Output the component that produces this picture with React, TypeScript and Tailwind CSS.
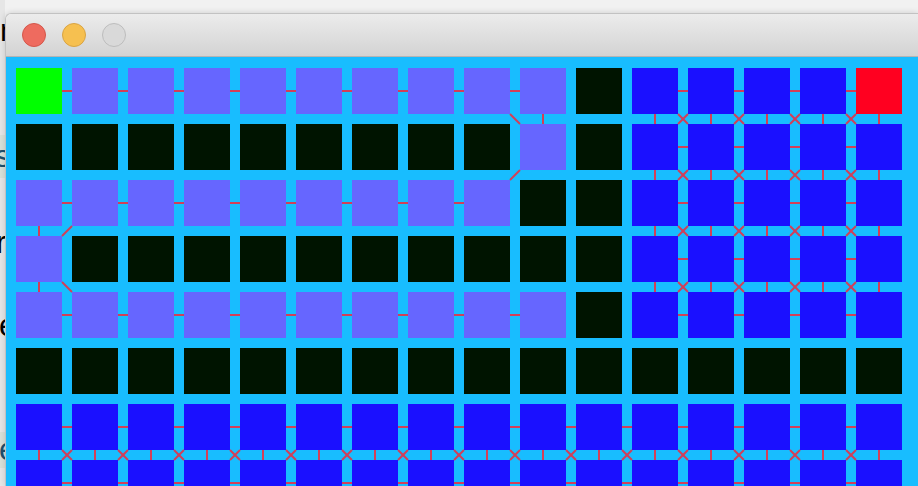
import React from "react"

// grid of the path finder: S start, E end, P path, W wall, U open
const GRID = [
  "SPPPPPPPPPWUUUUE",
  "WWWWWWWWWPWUUUUU",
  "PPPPPPPPPWWUUUUU",
  "PWWWWWWWWWWUUUUU",
  "PPPPPPPPPPWUUUUU",
  "WWWWWWWWWWWWWWWW",
  "UUUUUUUUUUUUUUUU",
  "UUUUUUUUUUUUUUUU",
]

const CELL = 46
const GAP = 10
const STEP = CELL + GAP

const cellColor: Record<string, string> = {
  S: "bg-[#00ff00]",
  E: "bg-[#ff0020]",
  P: "bg-[#6666ff]",
  W: "bg-[#001400]",
  U: "bg-[#1a10ff]",
}

function open(r: number, c: number) {
  const row = GRID[r]
  if (!row) return false
  const ch = row[c]
  return ch !== undefined && ch !== "W"
}

function buildEdges() {
  const lines: { x1: number; y1: number; x2: number; y2: number }[] = []
  GRID.forEach((row, r) => {
    row.split("").forEach((_, c) => {
      if (!open(r, c)) return
      const x = c * STEP
      const y = r * STEP
      if (open(r, c + 1)) lines.push({ x1: x + CELL, y1: y + CELL / 2, x2: x + STEP, y2: y + CELL / 2 })
      if (open(r + 1, c)) lines.push({ x1: x + CELL / 2, y1: y + CELL, x2: x + CELL / 2, y2: y + STEP })
      if (open(r + 1, c + 1)) lines.push({ x1: x + CELL, y1: y + CELL, x2: x + STEP, y2: y + STEP })
      if (open(r + 1, c - 1)) lines.push({ x1: x, y1: y + CELL, x2: x - GAP, y2: y + STEP })
    })
  })
  return lines
}

function TrafficLights() {
  return (
    <div className="flex gap-[16px] pl-[16px] pt-[9px]">
      <span className="h-[24px] w-[24px] rounded-full border border-[#d4574b] bg-[#ee6b5f]" />
      <span className="h-[24px] w-[24px] rounded-full border border-[#d9a444] bg-[#f6c050]" />
      <span className="h-[24px] w-[24px] rounded-full border border-[#bdbdbd] bg-[#d9d9d9]" />
    </div>
  )
}

function Board() {
  const edges = buildEdges()
  const w = 16 * STEP - GAP
  const h = GRID.length * STEP - GAP
  return (
    <div className="relative w-fit">
      <div className="grid grid-cols-[repeat(16,46px)] gap-[10px]">
        {GRID.map((row, r) =>
          row.split("").map((ch, c) => (
            <div key={`${r}-${c}`} className={`h-[46px] w-[46px] ${cellColor[ch]}`} />
          ))
        )}
      </div>
      {/* edges between walkable neighbours */}
      <svg className="pointer-events-none absolute left-0 top-0" width={w} height={h}>
        {edges.map((l, i) => (
          <line key={i} {...l} stroke="#d23f58" strokeWidth={2} />
        ))}
      </svg>
    </div>
  )
}

export default function App() {
  return (
    <div className="flex h-[486px] w-[918px] overflow-hidden bg-[#f1f1f1] font-['Liberation_Sans',Arial,sans-serif]">
      {/* text of the page behind the window */}
      <div className="flex w-[5px] shrink-0 flex-col overflow-hidden bg-[#e6e6e6] text-[31px] leading-[31px] text-black">
        <div className="mt-[15px] h-[31px] pl-[0px]">n</div>
        <div className="mt-[89px] h-[43px] bg-[#d9e1d9] pt-[6px] pl-[0px] ml-[-5px] text-[#1f4f6c]">s</div>
        <div className="mt-[49px] h-[31px] ml-[-4px]">r</div>
        <div className="mt-[52px] h-[31px] ml-[-1px]">e</div>
        <div className="mt-[91px] h-[36px] bg-[#d9e1d9] pt-[2px] ml-[-1px] text-[#1f4f6c]">e</div>
      </div>

      {/* window */}
      <div className="mt-[13px] flex min-w-0 flex-1 flex-col rounded-tl-[6px] border-l border-t border-[#c2c2c2] shadow-[0_0_6px_rgba(0,0,0,0.15)]">
        <div className="h-[43px] shrink-0 rounded-tl-[6px] border-b border-[#b4b4b4] bg-gradient-to-b from-[#ececec] to-[#d3d3d3]">
          <TrafficLights />
        </div>
        <div className="flex-1 bg-[#18bdff] pl-[10px] pt-[11px]">
          <Board />
        </div>
      </div>
    </div>
  )
}
